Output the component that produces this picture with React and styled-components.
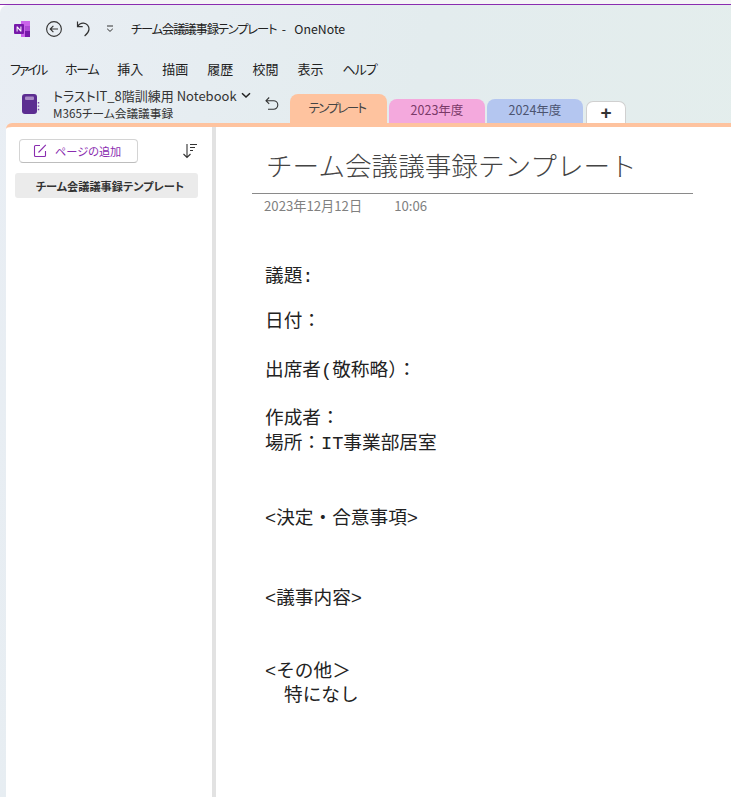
import React from 'react'
import styled, { createGlobalStyle } from 'styled-components'

const jp = `"Noto Sans CJK JP", "Noto Sans", sans-serif`

const Global = createGlobalStyle`
  html, body { margin: 0; padding: 0; background: #fff; }
  body { font-family: ${jp}; overflow: hidden; }
`

const Window = styled.div`
  width: 731px;
  height: 797px;
  display: flex;
  flex-direction: column;
  overflow: hidden;
  background: #fff;
`
const TopEdge = styled.div`
  height: 4px;
  flex: none;
  background: #f4f4f6;
  border-bottom: 1px solid #8a2cb0;
`
const Chrome = styled.div`
  flex: 1;
  display: flex;
  flex-direction: column;
  border-top-left-radius: 8px;
  background: linear-gradient(100deg, #e9eef4 0%, #e3ecee 50%, #e4eeec 100%);
  min-height: 0;
`
const TitleBar = styled.div`
  height: 48px;
  flex: none;
  display: flex;
  align-items: center;
  padding-left: 14px;
`
const IconButton = styled.span`
  display: inline-flex;
  margin-left: ${p => p.$left || 0}px;
  color: #333;
`
const WindowTitle = styled.span`
  margin-left: 17px;
  font-size: 12.3px;
  color: #222;
  white-space: pre;
  font-feature-settings: "palt";
`
const WindowTitleName = styled.span`
  letter-spacing: -1.15px;
`
const Menu = styled.nav`
  height: 30px;
  flex: none;
  display: flex;
  align-items: center;
  gap: 19px;
  padding-left: 10px;
`
const MenuItem = styled.span`
  font-size: 13px;
  color: #222;
  white-space: nowrap;
  font-feature-settings: "palt";
  letter-spacing: ${p => p.$tight || 0}px;
`
const NotebookBar = styled.div`
  height: 40px;
  flex: none;
  display: flex;
  align-items: flex-end;
  padding-left: 22px;
`
const NotebookInfo = styled.div`
  display: flex;
  align-items: center;
  gap: 13px;
  height: 36px;
  margin-bottom: 1px;
`
const NotebookText = styled.div`
  width: 198px;
  display: flex;
  flex-direction: column;
  font-size: 11.7px;
  line-height: 17px;
  color: #333;
  white-space: nowrap;
  font-feature-settings: "palt";
`
const NotebookName = styled.span`
  display: flex;
  align-items: center;
  justify-content: space-between;
  font-size: 13px;
`
const Tabs = styled.div`
  display: flex;
  align-items: flex-end;
  gap: 2px;
  margin-left: 10px;
`
const Tab = styled.div`
  width: ${p => p.$w}px;
  height: ${p => p.$h}px;
  display: flex;
  align-items: center;
  justify-content: center;
  border-radius: 8px 8px 0 0;
  background: ${p => p.$bg};
  color: ${p => p.$fg};
  font-size: 12.5px;
  font-feature-settings: "palt";
  letter-spacing: ${p => p.$tight || 0}px;
  padding-bottom: ${p => p.$pb || 0}px;
  padding-right: ${p => p.$pr || 0}px;
  box-sizing: border-box;
`
const AddTab = styled.div`
  width: 40px;
  height: 22px;
  margin-left: 1px;
  display: flex;
  align-items: center;
  justify-content: center;
  box-sizing: border-box;
  background: #fff;
  border: 1px solid #d0d0d0;
  border-bottom: none;
  border-radius: 7px 7px 0 0;
  font-family: "Liberation Sans", sans-serif;
  font-size: 19px;
  font-weight: 700;
  color: #333;
`
const Body = styled.div`
  flex: 1;
  min-height: 0;
  margin-left: 6px;
  display: flex;
  background: #fff;
  border-top: 4px solid #fec39f;
  border-top-left-radius: 6px;
`
const Sidebar = styled.aside`
  width: 206px;
  flex: none;
  box-sizing: border-box;
  padding: 12px 14px 0 9px;
`
const Divider = styled.div`
  width: 4px;
  flex: none;
  background: #e2e2e2;
`
const SideTop = styled.div`
  display: flex;
  align-items: center;
  justify-content: space-between;
  padding-left: 4px;
  margin-bottom: 10px;
`
const AddPage = styled.button`
  width: 119px;
  height: 24px;
  display: flex;
  align-items: center;
  gap: 8px;
  padding: 0 0 0 13px;
  box-sizing: border-box;
  background: #fff;
  border: 1px solid #d4d4d4;
  border-bottom-color: #bdbdbd;
  border-radius: 4px;
  color: #8a2cb0;
  font-family: ${jp};
  font-size: 11.2px;
  font-feature-settings: "palt";
  white-space: nowrap;
`
const PageRow = styled.div`
  width: 183px;
  height: 25px;
  display: flex;
  align-items: center;
  justify-content: center;
  box-sizing: border-box;
  padding-left: 7px;
  background: #ebebeb;
  border-radius: 3px;
  font-size: 11.2px;
  font-weight: 700;
  color: #333;
  font-feature-settings: "palt";
  white-space: nowrap;
`
const Page = styled.main`
  flex: 1;
  min-width: 0;
  padding: 20px 0 0 36px;
`
const PageTitle = styled.h1`
  width: 441px;
  height: 47px;
  margin: 0;
  box-sizing: border-box;
  padding: 2px 0 0 14px;
  border-bottom: 1px solid #8a8a8a;
  font-size: 26.6px;
  font-weight: 300;
  line-height: 32px;
  color: #444;
  white-space: nowrap;
`
const Stamp = styled.div`
  display: flex;
  gap: 32px;
  padding: 3px 0 0 12px;
  font-size: 13.2px;
  line-height: 18px;
  color: #808080;
`
const Notes = styled.div`
  padding: 50px 0 0 13px;
`
const Line = styled.p`
  margin: ${p => p.$top || 0}px 0 0 ${p => p.$indent || 0}px;
  font-family: "Liberation Mono", ${jp};
  font-size: 18.67px;
  line-height: 24px;
  font-weight: 400;
  color: #222;
  white-space: pre;
`

const lines = [
  ['議題:', 0],
  ['日付：', 21],
  ['出席者(敬称略）：', 25],
  ['作成者：', 24],
  ['場所：IT事業部居室', 1],
  ['<決定・合意事項>', 51],
  ['<議事内容>', 56],
  ['<その他＞', 49],
  ['特になし', 0, 19],
]

const menus = [
  ['ファイル', -2.25],
  ['ホーム', -1.3],
  ['挿入'],
  ['描画'],
  ['履歴'],
  ['校閲'],
  ['表示'],
  ['ヘルプ', -1],
]

const App = () => (
  <Window>
    <Global />
    <TopEdge />
    <Chrome>
      <TitleBar>
        <svg width="16" height="16" viewBox="0 0 16 16">
          <rect x="7" y="0" width="9" height="16" fill="#ca64ea" />
          <rect x="11" y="5" width="5" height="5" fill="#ae4bd5" />
          <rect x="11" y="10" width="5" height="6" fill="#7719aa" />
          <rect x="0" y="3" width="10" height="10" rx="1" fill="#7719aa" />
          <path d="M2.6 10.5V5.5h1L6.4 8.8V5.5h1v5h-1L3.6 7.2v3.3z" fill="#fff" />
        </svg>
        <IconButton $left={15}>
          <svg width="18" height="18" viewBox="0 0 18 18" fill="none" stroke="#333" strokeWidth="1.1">
            <circle cx="9" cy="9" r="7.4" />
            <path d="M13 9H5.2M8.4 5.8 5.2 9l3.2 3.2" />
          </svg>
        </IconButton>
        <IconButton $left={12}>
          <svg width="18" height="18" viewBox="0 0 18 18" fill="none" stroke="#333" strokeWidth="1.2">
            <path d="M2.5 1.5v5.2h5.2M2.7 6.6C4 4.2 6.2 3 8.6 3.2c3.2.3 5.6 3 5.4 6.2-.2 2.5-1.8 4.6-4.4 6.6" />
          </svg>
        </IconButton>
        <IconButton $left={13}>
          <svg width="8" height="8" viewBox="0 0 8 8" fill="none" stroke="#333" strokeWidth="1">
            <path d="M1 1h6" />
            <path d="M1.2 3.8 4 6.4l2.8-2.6" />
          </svg>
        </IconButton>
        <WindowTitle>
          <WindowTitleName>チーム会議議事録テンプレート</WindowTitleName>  -   OneNote
        </WindowTitle>
      </TitleBar>
      <Menu>
        {menus.map(([m, tight]) => <MenuItem key={m} $tight={tight}>{m}</MenuItem>)}
      </Menu>
      <NotebookBar>
        <NotebookInfo>
          <svg width="18" height="22" viewBox="0 0 18 22">
            <rect x="0" y="1" width="15" height="20" rx="3" fill="#5c2d91" />
            <rect x="3" y="3.5" width="9" height="3.5" rx="1" fill="#a98bc6" />
            <path d="M16.5 9v1.4M16.5 12.4v1.4M16.5 15.8v1.4" stroke="#7a4aa6" strokeWidth="1.4" />
          </svg>
          <NotebookText>
            <NotebookName>
              トラストIT_8階訓練用 Notebook
              <svg width="10" height="7" viewBox="0 0 10 7" fill="none" stroke="#222" strokeWidth="1.5">
                <path d="M1 1.2 5 5l4-3.8" />
              </svg>
            </NotebookName>
            <span>M365チーム会議議事録</span>
          </NotebookText>
          <svg width="16" height="16" viewBox="0 0 16 16" fill="none" stroke="#333" strokeWidth="1.1">
            <path d="M5.2 1.5 2 4.7l3.2 3.2M2 4.7h7.5a4.3 4.3 0 0 1 0 8.6H4" />
          </svg>
        </NotebookInfo>
        <Tabs>
          <Tab $w={97} $h={29} $bg="#fec39f" $fg="#444" $pb={2} $pr={3} $tight={-1.6}>テンプレート</Tab>
          <Tab $w={96} $h={24} $bg="#f4a9dd" $fg="#7a3a68" $pb={3}>2023年度</Tab>
          <Tab $w={96} $h={24} $bg="#b4c6f0" $fg="#4c5470" $pb={3}>2024年度</Tab>
          <AddTab>+</AddTab>
        </Tabs>
      </NotebookBar>
      <Body>
        <Sidebar>
          <SideTop>
            <AddPage>
              <svg width="14" height="14" viewBox="0 0 14 14" fill="none" stroke="#8a2cb0" strokeWidth="1.1">
                <path d="M7 1.5H2.5a1 1 0 0 0-1 1v9a1 1 0 0 0 1 1h9a1 1 0 0 0 1-1V7" />
                <path d="M5.5 8.5 12.8.9" />
              </svg>
              ページの追加
            </AddPage>
            <svg width="16" height="16" viewBox="0 0 16 16" fill="none" stroke="#333" strokeWidth="1.1">
              <path d="M5 1v13.5M1.5 11 5 14.5 8.5 11M8 1.5h7M8 4.5h5M8 7.5h3" />
            </svg>
          </SideTop>
          <PageRow>チーム会議議事録テンプレート</PageRow>
        </Sidebar>
        <Divider />
        <Page>
          <PageTitle>チーム会議議事録テンプレート</PageTitle>
          <Stamp>
            <span>2023年12月12日</span>
            <span>10:06</span>
          </Stamp>
          <Notes>
            {lines.map(([text, top, indent]) => (
              <Line key={text} $top={top} $indent={indent}>{text}</Line>
            ))}
          </Notes>
        </Page>
      </Body>
    </Chrome>
  </Window>
)

export default App
